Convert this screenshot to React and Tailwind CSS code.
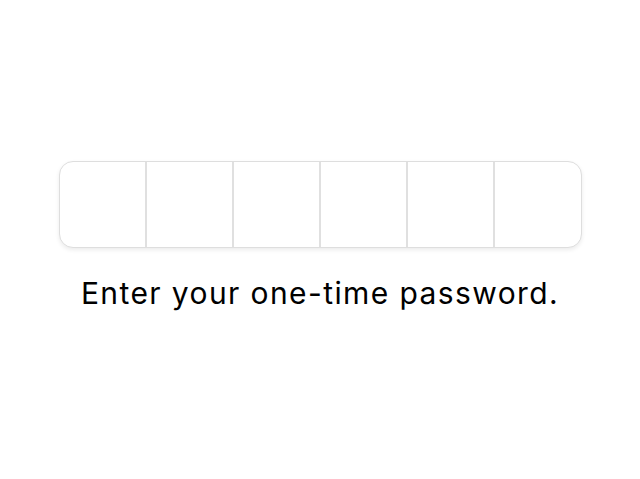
export default function App() {
  const cells = [0, 1, 2, 3, 4, 5];
  return (
    <div className="w-[640px] h-[479px] bg-white flex flex-col items-center pt-[161px]" style={{ fontFamily: 'Inter, "Noto Sans", sans-serif' }}>
      <div className="flex w-[523px] h-[87px] rounded-[14px] border border-[#dedede] bg-white shadow-[0_2px_4px_rgba(0,0,0,0.08)] overflow-hidden">
        {cells.map((i) => (
          <div key={i} className={`flex-1 ${i > 0 ? 'border-l-2 border-[#e0e0e0]' : ''}`} />
        ))}
      </div>
      <p className="mt-[27px] text-[30px] leading-[36px] text-black tracking-[1.4px]">Enter your one-time password.</p>
    </div>
  );
}
